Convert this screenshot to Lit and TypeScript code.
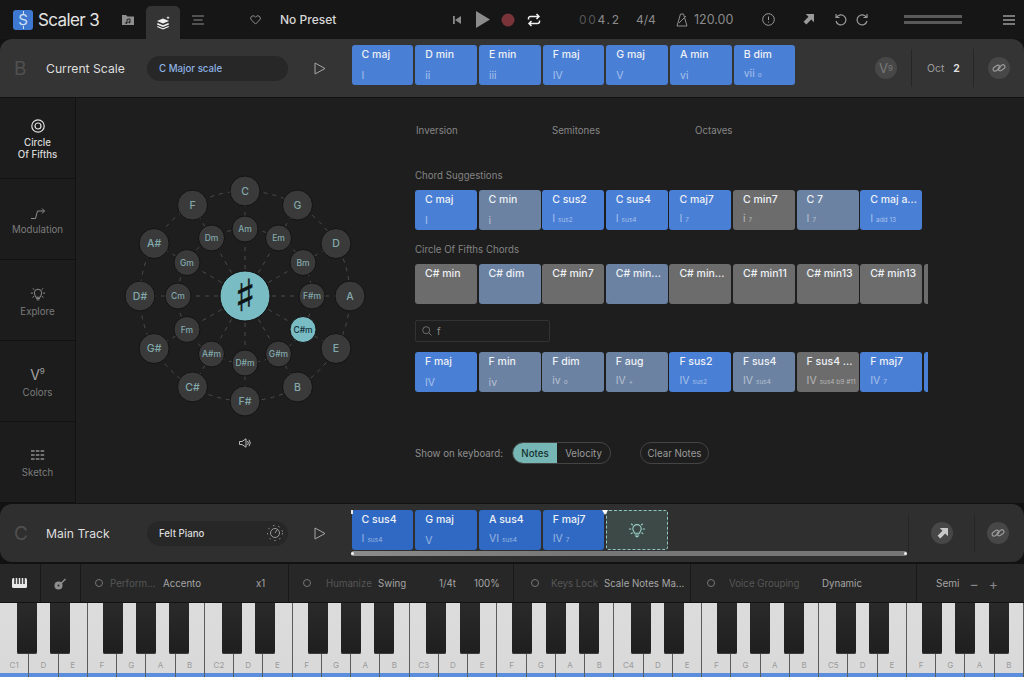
import { LitElement, html, css, svg } from 'lit';
import { customElement } from 'lit/decorators.js';

type Chord = { n: string; d?: string; s?: string; k: string };

const scaleChords: Chord[] = [
  { n: 'C maj', d: 'I', k: 'blue' },
  { n: 'D min', d: 'ii', k: 'blue' },
  { n: 'E min', d: 'iii', k: 'blue' },
  { n: 'F maj', d: 'IV', k: 'blue' },
  { n: 'G maj', d: 'V', k: 'blue' },
  { n: 'A min', d: 'vi', k: 'blue' },
  { n: 'B dim', d: 'vii', s: 'o', k: 'blue' },
];

const suggestions: Chord[] = [
  { n: 'C maj', d: 'I', k: 'blue' },
  { n: 'C min', d: 'i', k: 'slate' },
  { n: 'C sus2', d: 'I', s: 'sus2', k: 'blue' },
  { n: 'C sus4', d: 'I', s: 'sus4', k: 'blue' },
  { n: 'C maj7', d: 'I', s: '7', k: 'blue' },
  { n: 'C min7', d: 'i', s: '7', k: 'grey' },
  { n: 'C 7', d: 'I', s: '7', k: 'slate' },
  { n: 'C maj a...', d: 'I', s: 'add 13', k: 'blue' },
];

const fifths: Chord[] = [
  { n: 'C# min', k: 'grey' },
  { n: 'C# dim', k: 'slate' },
  { n: 'C# min7', k: 'grey' },
  { n: 'C# min...', k: 'slate' },
  { n: 'C# min...', k: 'grey' },
  { n: 'C# min11', k: 'grey' },
  { n: 'C# min13', k: 'grey' },
  { n: 'C# min13', k: 'grey' },
  { n: '', k: 'grey' },
];

const search: Chord[] = [
  { n: 'F maj', d: 'IV', k: 'blue' },
  { n: 'F min', d: 'iv', k: 'slate' },
  { n: 'F dim', d: 'iv', s: 'o', k: 'slate' },
  { n: 'F aug', d: 'IV', s: '+', k: 'slate' },
  { n: 'F sus2', d: 'IV', s: 'sus2', k: 'blue' },
  { n: 'F sus4', d: 'IV', s: 'sus4', k: 'slate' },
  { n: 'F sus4 ...', d: 'IV', s: 'sus4 b9 #11', k: 'grey' },
  { n: 'F maj7', d: 'IV', s: '7', k: 'blue' },
  { n: '', k: 'blue' },
];

const track: Chord[] = [
  { n: 'C sus4', d: 'I', s: 'sus4', k: 'deep' },
  { n: 'G maj', d: 'V', k: 'deep' },
  { n: 'A sus4', d: 'VI', s: 'sus4', k: 'deep' },
  { n: 'F maj7', d: 'IV', s: '7', k: 'deep' },
];

const outer = ['C', 'G', 'D', 'A', 'E', 'B', 'F#', 'C#', 'G#', 'D#', 'A#', 'F'];
const inner = ['Am', 'Em', 'Bm', 'F#m', 'C#m', 'G#m', 'D#m', 'A#m', 'Fm', 'Cm', 'Gm', 'Dm'];

const whites = ['C', 'D', 'E', 'F', 'G', 'A', 'B'];
const blackOffsets = [16.7, 50, 102.7, 136, 169.3];
const KEY_W = 1024 / 35;
const OCT_W = KEY_W * 7;

const CX = 125;
const CY = 126;

const polar = (r: number, i: number) => {
  const a = (i * Math.PI) / 6 - Math.PI / 2;
  return [CX + r * Math.cos(a), CY + r * Math.sin(a)];
};

const linkIcon = html`<svg width="14" height="14" viewBox="0 0 14 14" fill="none" stroke="#9a9a9a" stroke-width="1.2">
  <rect x="0.8" y="5.2" width="7.4" height="4" rx="2" transform="rotate(-35 4.5 7.2)" />
  <rect x="5.8" y="4.8" width="7.4" height="4" rx="2" transform="rotate(-35 9.5 6.8)" />
</svg>`;

const bulb = (color: string, size: number) => html`<svg width=${size} height=${size} viewBox="0 0 18 18" fill="none" stroke=${color} stroke-width="1.1" stroke-linecap="round">
  <path d="M6.4 12.2c0-1.6-1.6-2.3-1.6-4.4a4.2 4.2 0 0 1 8.4 0c0 2.1-1.6 2.8-1.6 4.4z" />
  <path d="M7.2 14h3.6M8 15.6h2" />
  <path d="M3.4 3l1 .8M14.6 3l-1 .8M1.4 8h1.5M15.1 8h1.5M3.2 12.6l1.1-.8M14.8 12.6l-1.1-.8" />
</svg>`;

const playOutline = html`<svg width="12" height="13" viewBox="0 0 12 13" fill="none" stroke="#a5a5a5" stroke-width="1"><path d="M1 1l10 5.500L1 12z" stroke-linejoin="round" /></svg>`;

@customElement('app-root')
export class AppRoot extends LitElement {
  static styles = css`
    :host {
      display: block;
      width: 1024px;
      height: 677px;
      overflow: hidden;
      background: #121212;
      font-family: Inter, 'Liberation Sans', sans-serif;
      color: #ddd;
    }

    /* top bar */
    .top {
      height: 39px;
      display: flex;
      align-items: center;
      background: #161616;
    }
    .top svg {
      flex: none;
    }
    .logo {
      position: relative;
      margin-left: 13px;
      width: 20px;
      height: 20px;
      border-radius: 3px;
      background: #3f78d0;
      color: #cfe0f8;
      font-size: 15px;
      display: flex;
      align-items: center;
      justify-content: center;
    }
    .logo::before,
    .logo::after {
      content: '';
      position: absolute;
      left: 9.500px;
      width: 1px;
      height: 3px;
      background: #cfe0f8;
    }
    .logo::before {
      top: 1px;
    }
    .logo::after {
      bottom: 1px;
    }
    .brand {
      margin-left: 5px;
      width: 83px;
      font-size: 17px;
      letter-spacing: -0.6px;
      color: #e4e4e4;
      white-space: nowrap;
    }
    .tab {
      margin-left: 11px;
      align-self: flex-end;
      width: 34px;
      height: 33px;
      background: #343434;
      border-radius: 5px 5px 0 0;
      display: flex;
      align-items: center;
      justify-content: center;
    }
    .preset {
      margin-left: 19px;
      width: 172px;
      font-size: 12px;
      font-weight: 500;
      color: #d6d6d6;
    }
    .pos {
      margin-left: 38px;
      width: 57px;
      font-size: 12px;
      letter-spacing: 1.7px;
      color: #8b8b8b;
      white-space: nowrap;
    }
    .pos i {
      font-style: normal;
      color: #555;
    }
    .sig {
      font-size: 12px;
      color: #8b8b8b;
      width: 40px;
    }
    .tempo {
      font-size: 12.5px;
      color: #8b8b8b;
      margin-left: 6px;
      width: 68px;
    }
    .levels {
      margin-left: 35px;
      width: 58px;
      display: flex;
      flex-direction: column;
      gap: 3px;
    }
    .levels span {
      height: 3px;
      background: #5a5a5a;
    }

    /* track-like panels */
    .panel {
      height: 58px;
      background: #343434;
      display: flex;
      align-items: center;
      position: relative;
    }
    .scale {
      border-radius: 12px 12px 0 0;
      margin-bottom: 1px;
    }
    .trackp {
      margin-top: 1px;
      margin-bottom: 2px;
      border-radius: 12px;
      background: #2f2f2f;
    }
    .letter {
      width: 46px;
      padding-left: 14px;
      box-sizing: border-box;
      font-size: 19px;
      color: #505050;
    }
    .pname {
      width: 101px;
      font-size: 12.2px;
      color: #dedede;
      white-space: nowrap;
    }
    .pill {
      width: 141px;
      height: 25px;
      box-sizing: border-box;
      padding: 0 4px 0 12px;
      border-radius: 13px;
      background: #272727;
      display: flex;
      align-items: center;
      justify-content: space-between;
      font-size: 9.700px;
      font-weight: 500;
    }
    .pill.scalep {
      color: #8db2e4;
    }
    .playo {
      width: 63.600px;
      display: flex;
      justify-content: center;
      box-sizing: border-box;
    }
    .cells {
      display: flex;
      gap: 2px;
      align-self: flex-start;
      margin-top: 6px;
    }
    .cells .cell {
      width: 61.700px;
    }
    .round {
      width: 22px;
      height: 22px;
      border-radius: 50%;
      background: #474747;
      display: flex;
      align-items: center;
      justify-content: center;
      flex: none;
      color: #7a7a7a;
      font-size: 13px;
    }
    .round sup {
      font-size: 8px;
      line-height: 0;
    }
    .rule {
      width: 1px;
      height: 38px;
      background: #262626;
      flex: none;
    }
    .oct {
      width: 61px;
      padding: 0 13px 0 15px;
      box-sizing: border-box;
      display: flex;
      justify-content: space-between;
      font-size: 10.500px;
      color: #9a9a9a;
    }
    .oct b {
      color: #e2e2e2;
      font-weight: 600;
    }
    .scroll {
      position: absolute;
      left: 351px;
      top: 47px;
      width: 556px;
      height: 5px;
      border-radius: 3px;
      background: linear-gradient(90deg, #8c8c8c, #767676 40%, #767676);
    }
    .scroll::before,
    .scroll::after {
      content: '';
      position: absolute;
      top: 1px;
      width: 3px;
      height: 3px;
      border-radius: 50%;
      background: #f0f0f0;
    }
    .scroll::before {
      left: 0;
    }
    .scroll::after {
      right: 0;
    }
    .marker {
      position: absolute;
      left: 602px;
      top: 6px;
      width: 0;
      height: 0;
      border-left: 3.500px solid transparent;
      border-right: 3.500px solid transparent;
      border-top: 5px solid #fff;
    }
    .marker0 {
      position: absolute;
      left: 351px;
      top: 6px;
      width: 2px;
      height: 4px;
      background: #e8e8e8;
    }
    .idea {
      width: 62px;
      height: 40px;
      box-sizing: border-box;
      border: 1.500px dashed #8fc5c0;
      border-radius: 3px;
      background: #3c4947;
      display: flex;
      align-items: center;
      justify-content: center;
    }

    /* chord cell */
    .cell {
      width: 62px;
      height: 40px;
      flex: none;
      box-sizing: border-box;
      padding: 3px 10px 3px;
      border-radius: 3px;
      display: flex;
      flex-direction: column;
      justify-content: space-between;
      overflow: hidden;
      white-space: nowrap;
    }
    .blue {
      background: #4a7fd6;
    }
    .deep {
      background: #2f69c4;
    }
    .slate {
      background: #6b82a3;
    }
    .grey {
      background: #6c6c6c;
    }
    .nm {
      font-size: 10.500px;
      font-weight: 500;
      color: #eef1f5;
      line-height: 13px;
      min-height: 13px;
    }
    .deg {
      font-size: 10.500px;
      color: rgba(255, 255, 255, 0.5);
      line-height: 13px;
      min-height: 13px;
    }
    .deg small {
      font-size: 6.500px;
      margin-left: 3px;
    }

    /* middle */
    .mid {
      height: 405px;
      display: flex;
      background: #1e1e1e;
    }
    .side {
      width: 75px;
      flex: none;
      background: #1c1c1c;
      border-right: 1px solid #121212;
      display: grid;
      grid-template-rows: repeat(5, 81px);
    }
    .navitem {
      border-bottom: 1px solid #111;
      display: flex;
      flex-direction: column;
      align-items: center;
      justify-content: center;
      gap: 4px;
      padding-top: 4px;
      font-size: 9.700px;
      line-height: 12px;
      color: #7b7b7b;
      text-align: center;
      box-sizing: border-box;
    }
    .navitem.on {
      color: #d8d8d8;
      font-weight: 500;
    }
    .navitem .v9 {
      font-size: 14px;
      line-height: 16px;
      color: #a0a0a0;
    }
    .navitem .v9 sup {
      font-size: 8px;
      line-height: 0;
    }
    .navitem .grid3 {
      margin-bottom: 3px;
    }
    .wheel {
      width: 339px;
      flex: none;
      box-sizing: border-box;
      padding: 72px 0 0 44px;
      display: flex;
      flex-direction: column;
    }
    .speaker {
      margin: 16px 0 0 119px;
    }
    .right {
      flex: 1;
      min-width: 0;
      padding-top: 27px;
    }
    .tabs3 {
      display: grid;
      grid-template-columns: 136px 143px auto;
      padding-left: 1px;
      font-size: 9.700px;
      line-height: 12px;
      color: #868686;
    }
    .lbl {
      font-size: 9.700px;
      line-height: 12px;
      color: #838383;
    }
    .first {
      margin-top: 33px;
    }
    .second {
      margin-top: 14px;
    }
    .row {
      width: 513px;
      display: flex;
      gap: 1.600px;
      overflow: hidden;
      margin-top: 8px;
    }
    .searchbox {
      width: 135px;
      height: 22px;
      margin-top: 16px;
      box-sizing: border-box;
      border: 1px solid #323232;
      border-radius: 2px;
      display: flex;
      align-items: center;
      gap: 5px;
      padding-left: 6px;
      font-size: 10px;
      color: #8a8a8a;
    }
    .row.s3 {
      margin-top: 10px;
    }
    .show {
      display: flex;
      align-items: center;
      margin-top: 50px;
      font-size: 9.700px;
      color: #8f8f8f;
    }
    .show .t {
      width: 97px;
    }
    .toggle {
      width: 99px;
      height: 22px;
      box-sizing: border-box;
      border: 1px solid #444;
      border-radius: 11px;
      display: flex;
      overflow: hidden;
    }
    .toggle span {
      display: flex;
      align-items: center;
      justify-content: center;
    }
    .toggle .a {
      width: 44px;
      background: #76b7b5;
      color: #17302f;
      font-weight: 500;
    }
    .toggle .b {
      flex: 1;
      color: #9a9a9a;
    }
    .clear {
      margin-left: 29px;
      width: 69px;
      height: 22px;
      box-sizing: border-box;
      border: 1px solid #444;
      border-radius: 11px;
      display: flex;
      align-items: center;
      justify-content: center;
      color: #9a9a9a;
    }

    /* toolbar */
    .tools {
      height: 38px;
      margin-bottom: 1px;
      display: flex;
      background: #272727;
      font-size: 9.700px;
      color: #a5a5a5;
    }
    .tool {
      border-right: 1px solid #181818;
      display: flex;
      align-items: center;
      box-sizing: border-box;
      white-space: nowrap;
      flex: none;
    }
    .iconbox {
      width: 40.500px;
      justify-content: center;
    }
    .radio {
      width: 8px;
      height: 8px;
      box-sizing: border-box;
      border: 1px solid #777;
      border-radius: 50%;
      flex: none;
    }
    .dim {
      color: #565656;
    }
    .tool span {
      overflow: hidden;
    }
    .semi {
      flex: 1;
      display: flex;
      align-items: center;
      padding-left: 19px;
      gap: 10px;
      color: #a5a5a5;
      font-size: 10px;
    }
    .semi em {
      font-style: normal;
      font-size: 14px;
      color: #888;
    }

    /* keyboard */
    .keys {
      position: relative;
      height: 74px;
      display: grid;
      grid-template-columns: repeat(35, 1fr);
      background: #222;
    }
    .white {
      box-sizing: border-box;
      border-right: 1px solid #5c5c5c;
      background: linear-gradient(to top, #5b8edc 4px, #d9d9d9 4px, #dcdcdc);
      display: flex;
      align-items: flex-end;
      justify-content: center;
      padding-bottom: 7px;
      font-size: 8px;
      line-height: 10px;
      color: #9a9a9a;
    }
    .black {
      position: absolute;
      top: 0;
      width: 20px;
      height: 51px;
      border-radius: 0 0 2px 2px;
      background: linear-gradient(#2a2a2a, #1f1f1f);
      box-shadow: inset 0 -1px 0 #3c3c3c;
    }
  `;

  chord(c: Chord) {
    return html`<div class="cell ${c.k}">
      <span class="nm">${c.n}</span>
      <span class="deg">${c.d}${c.s ? html`<small>${c.s}</small>` : ''}</span>
    </div>`;
  }

  renderTop() {
    return html`<div class="top">
      <div class="logo">S</div>
      <div class="brand">Scaler 3</div>
      <svg width="14" height="12" viewBox="0 0 14 12">
        <path d="M1 1h4l1.500 1.500H13V11H1z" fill="#8e8e8e" />
        <path d="M6 9V5.500l3-.7v3.400" fill="none" stroke="#222" stroke-width="1" />
        <circle cx="5.300" cy="9" r="1" fill="#222" /><circle cx="8.300" cy="8.300" r="1" fill="#222" />
      </svg>
      <div class="tab">
        <svg width="15" height="14" viewBox="0 0 15 14" fill="#f0f0f0">
          <path d="M7 2.500 13 5 7 7.600 1 5z" />
          <path d="M1.600 7 7 9.300 12.400 7 13 8.400 7 11 1 8.400z" />
          <path d="M1.600 10 7 12.200 12.400 10 13 11 7 13.600 1 11z" />
          <path d="M12 0l.5 1.300 1.300.5-1.300.5-.5 1.200-.5-1.200-1.200-.5 1.200-.5z" />
        </svg>
      </div>
      <svg style="margin-left:12px" width="12" height="10" viewBox="0 0 12 10" stroke="#8c8c8c" stroke-width="1.200">
        <path d="M0 1h12M1.500 5h9M0 9h12" />
      </svg>
      <svg style="margin-left:46px" width="11" height="10" viewBox="0 0 12 11" fill="none" stroke="#9a9a9a" stroke-width="1">
        <path d="M6 10 1.300 5.300a2.700 2.700 0 0 1 3.800-3.800L6 2.400l.9-.9a2.700 2.700 0 0 1 3.800 3.800z" />
      </svg>
      <div class="preset">No Preset</div>
      <svg width="10" height="10" viewBox="0 0 10 10" fill="#8a8a8a"><path d="M1 1h1.800v8H1zM9 1v8L3 5z" /></svg>
      <svg style="margin-left:13px" width="15" height="17" viewBox="0 0 15 17" fill="#8c8c8c"><path d="M1 0l14 8.500L1 17z" /></svg>
      <svg style="margin-left:11px" width="14" height="14" viewBox="0 0 14 14"><circle cx="7" cy="7" r="6.500" fill="#7a3338" /></svg>
      <svg style="margin-left:12px" width="14" height="14" viewBox="0 0 14 14" fill="none" stroke="#f0f0f0" stroke-width="1.500">
        <path d="M1.500 6.500V5.500a2 2 0 0 1 2-2h8M9.500 1l2.500 2.500L9.500 6" />
        <path d="M12.500 7.500v1a2 2 0 0 1-2 2h-8M4.500 13 2 10.500 4.500 8" />
      </svg>
      <div class="pos"><i>00</i>4.2</div>
      <div class="sig">4/4</div>
      <svg width="12" height="14" viewBox="0 0 12 14" fill="none" stroke="#8c8c8c" stroke-width="1"><path d="M4.500 1h3L11 13H1zM3 10l7-7" /></svg>
      <div class="tempo">120.00</div>
      <svg width="13" height="13" viewBox="0 0 13 13" fill="none" stroke="#9a9a9a" stroke-width="1"><circle cx="6.500" cy="6.500" r="5.800" /><path d="M6.500 3.500v3.500M6.500 8.600v1" /></svg>
      <svg style="margin-left:28px" width="11" height="11" viewBox="0 0 10 10" fill="#9a9a9a"><path d="M2.500 0H10v7.500L7.500 5 3 9.500.500 7 5 2.500z" /></svg>
      <svg style="margin-left:20px" width="13" height="13" viewBox="0 0 13 13" fill="none" stroke="#9a9a9a" stroke-width="1.200"><path d="M2.500 4.500A5 5 0 1 1 2 8M2 1v3.500h3.500" /></svg>
      <svg style="margin-left:9px" width="13" height="13" viewBox="0 0 13 13" fill="none" stroke="#9a9a9a" stroke-width="1.200"><path d="M10.500 4.500A5 5 0 1 0 11 8M11 1v3.500H7.500" /></svg>
      <div class="levels"><span></span><span></span></div>
      <svg style="margin-left:41px" width="12" height="10" viewBox="0 0 12 10" stroke="#9a9a9a" stroke-width="1.500"><path d="M0 1h12M0 5h12M0 9h12" /></svg>
    </div>`;
  }

  renderWheel() {
    const dash = 'stroke:#4b4b4b;stroke-width:1;stroke-dasharray:4 5;fill:none';
    const spokes = inner.map((_, i) => {
      const [a, b] = polar(27, i);
      const [c, d] = polar(54, i);
      const [e, f] = polar(80, i);
      const [g, h] = polar(90, i);
      return svg`<line x1=${a} y1=${b} x2=${c} y2=${d} style=${dash} /><line x1=${e} y1=${f} x2=${g} y2=${h} style=${dash} />`;
    });
    const outerNodes = outer.map((t, i) => {
      const [x, y] = polar(105, i);
      return svg`<circle cx=${x} cy=${y} r="15" fill="#3a3a3a" stroke="#131313" stroke-width="1" />
        <text x=${x} y=${y + 3.600} text-anchor="middle" font-size="10.500" font-weight="500" fill="#82a9ac">${t}</text>`;
    });
    const innerNodes = inner.map((t, i) => {
      const [x, y] = polar(67, i);
      const on = t === 'C#m';
      return svg`<circle cx=${x} cy=${y} r="13" fill=${on ? '#79bcc4' : '#3a3a3a'} stroke="#131313" stroke-width="1" />
        <text x=${x} y=${y + 3} text-anchor="middle" font-size="8.500" font-weight="500" fill=${on ? '#12303a' : '#82a9ac'}>${t}</text>`;
    });
    return html`<div class="wheel">
      <svg width="250" height="252" viewBox="0 0 250 252">
        <circle cx=${CX} cy=${CY} r="105" style=${dash} />
        <circle cx=${CX} cy=${CY} r="67" style=${dash} />
        ${spokes} ${outerNodes} ${innerNodes}
        <circle cx=${CX} cy=${CY} r="25" fill="#79bcc4" stroke="#131313" stroke-width="1" />
        <text x=${CX} y=${CY + 15} text-anchor="middle" font-size="44" font-family="DejaVu Sans" font-weight="700" fill="#0e1415" stroke="#0e1415" stroke-width="0.5">♯</text>
      </svg>
      <svg class="speaker" width="12" height="10" viewBox="0 0 12 10" fill="none" stroke="#bdbdbd" stroke-width="1">
        <path d="M.5 3.500h2.500L7 .8v8.400L3 6.500H.5z" /><path d="M8.500 3a3 3 0 0 1 0 4M10 1.800a5 5 0 0 1 0 6.400" />
      </svg>
    </div>`;
  }

  renderSide() {
    return html`<div class="side">
      <div class="navitem on">
        <svg width="14" height="14" viewBox="0 0 14 14" fill="none" stroke="#e0e0e0"><circle cx="7" cy="7" r="6.200" stroke-width="1.200" /><circle cx="7" cy="7" r="3" stroke-width="1.200" /></svg>
        <div>Circle<br />Of Fifths</div>
      </div>
      <div class="navitem">
        <svg width="16" height="13" viewBox="0 0 16 13" fill="none" stroke="#8c8c8c" stroke-width="1"><path d="M1 11.500h4.500l2-7.500h7M12 1.500 14.500 4 12 6.500" /></svg>
        <div>Modulation</div>
      </div>
      <div class="navitem">${bulb('#8c8c8c', 16)}<div>Explore</div></div>
      <div class="navitem"><div class="v9">V<sup>9</sup></div><div>Colors</div></div>
      <div class="navitem">
        <svg class="grid3" width="14" height="10" viewBox="0 0 14 10" stroke="#8c8c8c" stroke-width="1.500" stroke-dasharray="3.600 1.200"><path d="M0 1h14M0 5h14M0 9h14" /></svg>
        <div>Sketch</div>
      </div>
    </div>`;
  }

  renderRight() {
    return html`<div class="right">
      <div class="tabs3"><span>Inversion</span><span>Semitones</span><span>Octaves</span></div>
      <div class="lbl first">Chord Suggestions</div>
      <div class="row">${suggestions.map((c) => this.chord(c))}</div>
      <div class="lbl second">Circle Of Fifths Chords</div>
      <div class="row">${fifths.map((c) => this.chord(c))}</div>
      <div class="searchbox">
        <svg width="10" height="10" viewBox="0 0 10 10" fill="none" stroke="#6f6f6f"><circle cx="4.200" cy="4.200" r="3.500" /><path d="M6.800 6.800 9.500 9.500" /></svg>
        f
      </div>
      <div class="row s3">${search.map((c) => this.chord(c))}</div>
      <div class="show">
        <span class="t">Show on keyboard:</span>
        <div class="toggle"><span class="a">Notes</span><span class="b">Velocity</span></div>
        <div class="clear">Clear Notes</div>
      </div>
    </div>`;
  }

  renderTools() {
    const sections = [
      { w: 208, pad: 14, gap: 7, items: [['Perform...', 53, 'dim'], ['Accento', 93, ''], ['x1', 0, '']] },
      { w: 225, pad: 14, gap: 15, items: [['Humanize', 52, 'dim'], ['Swing', 61, ''], ['1/4t', 35, ''], ['100%', 0, '']] },
      { w: 177, pad: 17, gap: 12, items: [['Keys Lock', 53, 'dim'], ['Scale Notes Ma...', 0, '']] },
      { w: 226, pad: 16, gap: 14, items: [['Voice Grouping', 93, 'dim'], ['Dynamic', 0, '']] },
    ] as const;
    return html`<div class="tools">
      <div class="tool iconbox">
        <svg width="15" height="10" viewBox="0 0 15 10"><rect width="15" height="10" rx="1.500" fill="#e8e8e8" /><path d="M3 0v6M6 0v6M9 0v6M12 0v6" stroke="#222" stroke-width="1.400" /></svg>
      </div>
      <div class="tool iconbox">
        <svg width="13" height="13" viewBox="0 0 13 13" fill="#8f8f8f"><circle cx="4.500" cy="8.500" r="4" /><path d="M6 6.500 11 1.500l1 1-5 5z" /><circle cx="4.500" cy="8.500" r="1" fill="#272727" /></svg>
      </div>
      ${sections.map(
        (s) => html`<div class="tool" style="width:${s.w}px;padding-left:${s.pad}px">
          <i class="radio"></i>
          ${s.items.map(
            ([t, w, cls], i) => html`<span class=${cls} style="margin-left:${i === 0 ? s.gap : 0}px;${w ? `width:${w}px` : ''}">${t}</span>`
          )}
        </div>`
      )}
      <div class="semi"><span>Semi</span><em>−</em><em>+</em></div>
    </div>`;
  }

  renderKeys() {
    const keys = [];
    const blacks = [];
    for (let o = 0; o < 5; o++) {
      for (let i = 0; i < 7; i++) {
        keys.push(html`<div class="white">${i === 0 ? `C${o + 1}` : whites[i]}</div>`);
      }
      for (const b of blackOffsets) {
        blacks.push(html`<div class="black" style="left:${o * OCT_W + b}px"></div>`);
      }
    }
    return html`<div class="keys">${keys}${blacks}</div>`;
  }

  render() {
    return html`
      ${this.renderTop()}
      <div class="panel scale">
        <div class="letter">B</div>
        <div class="pname">Current Scale</div>
        <div class="pill scalep">C Major scale</div>
        <div class="playo">${playOutline}</div>
        <div class="cells">${scaleChords.map((c) => this.chord(c))}</div>
        <div class="round" style="margin-left:79.500px">V<sup>9</sup></div>
        <div class="rule" style="margin-left:14px"></div>
        <div class="oct"><span>Oct</span><b>2</b></div>
        <div class="rule"></div>
        <div class="round" style="margin-left:14px">${linkIcon}</div>
      </div>
      <div class="mid">${this.renderSide()} ${this.renderWheel()} ${this.renderRight()}</div>
      <div class="panel trackp">
        <div class="letter">C</div>
        <div class="pname">Main Track</div>
        <div class="pill">
          Felt Piano
          <svg width="18" height="18" viewBox="0 0 18 18" fill="none" stroke="#9a9a9a">
            <circle cx="9" cy="9" r="4.500" /><path d="M9 9l2-3" />
            <circle cx="9" cy="9" r="7.500" stroke-dasharray="1.500 4" />
          </svg>
        </div>
        <div class="playo">${playOutline}</div>
        <div class="cells">
          ${track.map((c) => this.chord(c))}
          <div class="idea">${bulb('#9ad0c8', 18)}</div>
        </div>
        <div class="rule" style="margin-left:240px"></div>
        <div class="round" style="margin-left:22px">
          <svg width="11" height="11" viewBox="0 0 10 10" fill="#c8c8c8"><path d="M2.500 0H10v7.500L7.500 5 3 9.500.500 7 5 2.500z" /></svg>
        </div>
        <div class="rule" style="margin-left:21px"></div>
        <div class="round" style="margin-left:12px">${linkIcon}</div>
        <div class="scroll"></div>
        <div class="marker0"></div>
        <div class="marker"></div>
      </div>
      ${this.renderTools()} ${this.renderKeys()}
    `;
  }
}
